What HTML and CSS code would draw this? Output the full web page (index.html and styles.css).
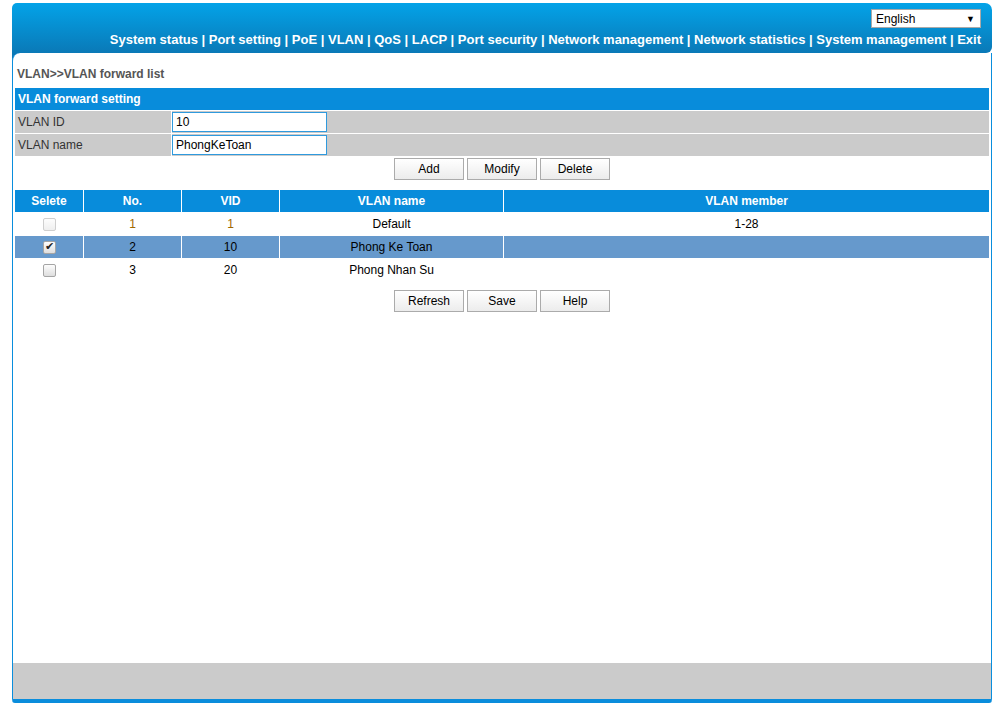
FILE: index.html
```html
<!DOCTYPE html>
<html>
<head>
<meta charset="utf-8">
<link rel="stylesheet" href="styles.css">
</head>
<body>
<div class="frame">
  <div class="header">
    <div class="lang"><span>English</span><span class="arrow">▼</span></div>
    <div class="nav">System status | Port setting | PoE | VLAN | QoS | LACP | Port security | Network management | Network statistics | System management | Exit</div>
  </div>
  <div class="main">
    <div class="content">
      <div class="crumb">VLAN&gt;&gt;VLAN forward list</div>
      <table class="form">
        <tr><td colspan="2" class="bar">VLAN forward setting</td></tr>
        <tr><td class="label">VLAN ID</td><td class="field"><input class="txt" type="text" value="10"></td></tr>
        <tr><td class="label">VLAN name</td><td class="field"><input class="txt" type="text" value="PhongKeToan"></td></tr>
        <tr><td colspan="2" class="btns"><button class="btn">Add</button><button class="btn">Modify</button><button class="btn">Delete</button></td></tr>
      </table>
      <table class="list">
        <tr class="head"><th class="c1">Selete</th><th class="c2">No.</th><th class="c3">VID</th><th class="c4">VLAN name</th><th>VLAN member</th></tr>
        <tr><td><input class="cb" type="checkbox" disabled></td><td class="def">1</td><td class="def">1</td><td>Default</td><td>1-28</td></tr>
        <tr class="sel"><td><input class="cb" type="checkbox" checked></td><td>2</td><td>10</td><td>Phong Ke Toan</td><td></td></tr>
        <tr><td><input class="cb" type="checkbox"></td><td>3</td><td>20</td><td>Phong Nhan Su</td><td></td></tr>
      </table>
      <div class="btns bottom"><button class="btn">Refresh</button><button class="btn">Save</button><button class="btn">Help</button></div>
    </div>
    <div class="footer"></div>
  </div>
</div>
</body>
</html>
```
FILE: styles.css
```css
html, body {
  margin: 0;
  padding: 0;
  background: #ffffff;
  font-family: "Liberation Sans", Arial, sans-serif;
  font-size: 12px;
  color: #000;
}
.frame {
  margin: 3px 0 0 12px;
  width: 980px;
  background: linear-gradient(#0a78b6, #0a78b6) no-repeat 0 50px / 12px 12px;
}
.header {
  height: 50px;
  box-sizing: border-box;
  padding: 6px 11px 0 0;
  background: linear-gradient(#03a3e8, #0a79b7);
  border-radius: 5px 7px 6px 0;
  display: flex;
  flex-direction: column;
  align-items: flex-end;
}
.lang {
  width: 110px;
  height: 19px;
  box-sizing: border-box;
  background: #fff;
  border: 1px solid #a9a9a9;
  display: flex;
  justify-content: space-between;
  align-items: center;
  padding: 0 5px 0 4px;
  font-size: 12px;
  color: #000;
}
.lang .arrow { font-size: 9px; }
.nav {
  margin-top: 4px;
  line-height: 16px;
  font-size: 13px;
  font-weight: bold;
  color: #fff;
  white-space: nowrap;
}
.main {
  background: #fff;
  border-left: 1px solid #0a8edd;
  border-right: 1px solid #0a8edd;
  border-bottom: 4px solid #0a8ddc;
  border-top-left-radius: 8px;
  border-bottom-left-radius: 3px;
  border-bottom-right-radius: 3px;
  overflow: hidden;
}
.content {
  height: 610px;
  padding: 0 1px;
  box-sizing: border-box;
}
.crumb {
  padding-top: 14px;
  line-height: 14px;
  font-weight: bold;
  color: #555;
  margin-left: 3px;
  margin-bottom: 6px;
}
table {
  width: 100%;
  border-collapse: separate;
  border-spacing: 1px;
}
td, th { padding: 0; }
.form td { height: 22px; }
.bar {
  background: #088cdb;
  color: #fff;
  font-weight: bold;
  padding-left: 3px;
}
.label {
  width: 156px;
  background: #cbcbcb;
  color: #333;
  padding-left: 3px;
  box-sizing: border-box;
}
.field { background: #cbcbcb; }
.txt {
  width: 155px;
  height: 20px;
  box-sizing: border-box;
  border: 1px solid #2f9ade;
  margin: 0;
  padding: 0 3px;
  font-family: "Liberation Sans", Arial, sans-serif;
  font-size: 12px;
  color: #000;
  display: block;
  outline: none;
}
.btns {
  text-align: center;
  font-size: 0;
}
.form .btns { height: 22px; padding-top: 1px; vertical-align: top; }
.btn {
  width: 70px;
  height: 22px;
  margin: 0 1.5px;
  border: 1px solid #ababab;
  background: linear-gradient(#ffffff, #ececec);
  font-family: "Liberation Sans", Arial, sans-serif;
  font-size: 12px;
  color: #000;
  padding: 0;
  border-radius: 0;
}
.list { margin-top: 8px; }
.list th {
  background: #088cdb;
  color: #fff;
  font-weight: bold;
  height: 22px;
  font-size: 12px;
}
.list td {
  height: 22px;
  text-align: center;
}
.c1 { width: 68px; }
.c2 { width: 97px; }
.c3 { width: 97px; }
.c4 { width: 223px; }
.list .def { color: #a06800; }
.sel td { background: #6699cc; }
.cb {
  appearance: none;
  -webkit-appearance: none;
  width: 13px;
  height: 13px;
  margin: 3px 0 0 0;
  border: 1px solid #a5a5a5;
  border-radius: 2px;
  background: linear-gradient(#fdfdfd, #dedede);
  position: relative;
}
.cb:disabled {
  border-color: #cfcfcf;
  background: linear-gradient(#fdfdfd, #efefef);
}
.cb:checked::after {
  content: "✔";
  position: absolute;
  left: 1px;
  top: -2px;
  font-size: 11px;
  color: #222;
}
.bottom { margin-top: 8px; }
.footer {
  height: 36px;
  background: #cbcbcb;
}
```
